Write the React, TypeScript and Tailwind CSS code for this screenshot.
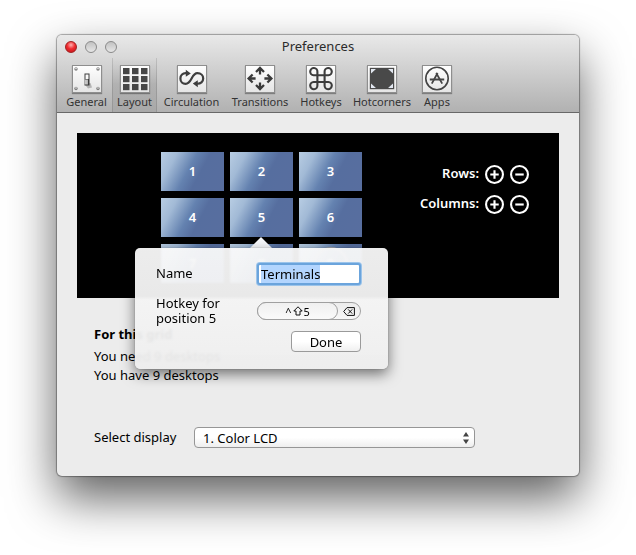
import React from 'react'

const General = () => (
  <>
    {[[4, 4], [26, 4], [4, 23.5], [26, 23.5]].map(([x, y]) => (
      <g key={`${x}-${y}`}>
        <circle cx={x} cy={y} r="1.7" fill="#808080" />
        <circle cx={x} cy={y - 0.5} r="0.8" fill="#e8e8e8" />
      </g>
    ))}
    <path d="M12.5 19l6-1 1.5 4.5-4 1z" fill="#b4b4b4" />
    <rect x="12.5" y="8.5" width="5" height="12" fill="#3c3c3c" />
    <rect x="13.5" y="9.5" width="3" height="4.5" fill="#fafafa" />
    <rect x="12.5" y="14.5" width="3.4" height="5" fill="#c4c4c4" />
  </>
)

const Layout = () => (
  <g fill="#464646">
    {[3, 11, 19].map((y) =>
      [3, 12, 21].map((x) => <rect key={`${x}-${y}`} x={x} y={y} width="6.5" height="6.2" />)
    )}
  </g>
)

const Circulation = () => (
  <>
    <path
      d="M10 8.3C5.5 7.6 3.4 10.4 3.4 13.4 3.4 16.9 5.8 18.8 8.6 18.8 14.8 18.8 14.4 8.2 20.4 8.2 24 8.2 26.2 10.6 26.2 13.4 26.2 16.6 23.8 19 19.8 18.7"
      fill="none" stroke="#3e3e3e" strokeWidth="2.2"
    />
    <path d="M8.8 4.8l5 3.6-5 3.4zM20.8 15.2l-5 3.4 5 3.6z" fill="#3e3e3e" />
  </>
)

const Transitions = () => (
  <path
    d="M15 9.5V3.4M11 7l4-4 4 4M15 17.5v6.2M11 20l4 4 4-4M10.6 13.5H4M7.6 9.5l-4 4 4 4M19.4 13.5H26M22.4 9.5l4 4-4 4"
    fill="none" stroke="#3a3a3a" strokeWidth="2.3"
  />
)

const Hotkeys = () => (
  <path
    d="M11.4 10.2h7.2v6.8h-7.2zM11.4 10.2H7.6a3.6 3.6 0 1 1 3.8-3.4zM18.6 10.2V6.8a3.6 3.6 0 1 1 3.8 3.4zM11.4 17v3.4A3.6 3.6 0 1 1 7.6 17zM18.6 17h3.8a3.6 3.6 0 1 1-3.8 3.4z"
    fill="none" stroke="#3c3c3c" strokeWidth="2.1"
  />
)

const Hotcorners = () => (
  <>
    <rect x="3.4" y="3.4" width="23.2" height="20.2" fill="#e2e7f0" stroke="#4a4a4a" strokeWidth="1.2" />
    <path d="M9.5 3.5h11l6 5.5v9l-6 5.5h-11l-6-5.5V9z" fill="#494949" />
  </>
)

const Apps = () => (
  <g fill="none" stroke="#444">
    <circle cx="15" cy="13.5" r="11.2" strokeWidth="1.6" />
    <path d="M9.8 18.6L15.6 8M14.2 8l6 10.6" strokeWidth="1.8" />
    <path d="M7.8 14.6h14.4" strokeWidth="2" />
  </g>
)

const tools = [
  { label: 'General', width: 'w-[51px]', Icon: General },
  { label: 'Layout', width: 'w-[45px]', Icon: Layout, active: true },
  { label: 'Circulation', width: 'w-[69px]', Icon: Circulation },
  { label: 'Transitions', width: 'w-[68px]', Icon: Transitions },
  { label: 'Hotkeys', width: 'w-[54px]', Icon: Hotkeys },
  { label: 'Hotcorners', width: 'w-[68px]', Icon: Hotcorners },
  { label: 'Apps', width: 'w-[42px]', Icon: Apps },
]

const Header = () => (
  <header className="flex flex-col border-b border-[#686868] bg-linear-to-b from-[#e9e9e9] to-[#b1b1b1]">
    <div className="grid h-[23px] grid-cols-[1fr_auto_1fr] items-center px-2">
      <div className="flex gap-2">
        <button aria-label="Close" className="size-3 rounded-full border border-[#a02020] bg-[radial-gradient(circle_at_50%_30%,#ffb0b0_0%,#f02c30_45%,#c01018_100%)]" />
        <button aria-label="Minimize" className="size-3 rounded-full border border-[#8a8a8a] bg-linear-to-b from-[#c2c2c2] to-[#e6e6e6]" />
        <button aria-label="Zoom" className="size-3 rounded-full border border-[#8a8a8a] bg-linear-to-b from-[#c2c2c2] to-[#e6e6e6]" />
      </div>
      <h1 className="text-[13px] text-[#2b2b2b]">Preferences</h1>
    </div>
    <nav className="flex px-1">
      {tools.map(({ label, width, Icon, active }) => (
        <button
          key={label}
          className={`${width} flex h-[54px] flex-col items-center pt-[7px] text-[11px] leading-4 text-[#333] ${
            active ? 'bg-linear-to-b from-transparent via-black/10 to-black/5 shadow-[inset_1px_0_0_#0000001c,inset_-1px_0_0_#0000001c]' : ''
          }`}
        >
          <svg
            viewBox="0 0 30 28"
            className="h-7 w-[30px] shrink-0 bg-linear-to-b from-white to-[#e4e4e4] shadow-[inset_0_0_0_1px_#8e8e8e,0_1px_1px_#0005]"
          >
            <Icon />
          </svg>
          <span className="mt-px">{label}</span>
        </button>
      ))}
    </nav>
  </header>
)

const Popover = () => (
  <div className="absolute top-[50px] -left-[95px] z-10 w-[253px] text-[13px] font-normal text-black">
    <svg viewBox="0 0 22 11" className="absolute -top-[11px] left-[115px] h-[11px] w-[22px]">
      <path d="M0 11L11 0l11 11z" fill="#f7f8fb" />
    </svg>
    <form
      onSubmit={(e) => e.preventDefault()}
      className="rounded-[5px] bg-linear-to-b from-[#f9f9f9]/95 to-[#ededed]/96 px-[21px] pt-[15px] pb-[17px] shadow-[0_0_1px_#0009,0_5px_14px_#0008] backdrop-blur-[1px]"
    >
      <div className="flex items-center justify-between">
        <label htmlFor="name">Name</label>
        <input
          id="name"
          defaultValue="Terminals"
          autoFocus
          onFocus={(e) => e.target.select()}
          className="mr-[6px] h-[22px] w-[104px] rounded-[3px] border-2 border-[#6ba4dc] bg-white px-[2px] leading-[18px] ring-1 ring-[#9cc4ea] outline-none selection:bg-[#b3d5fe] selection:text-black"
        />
      </div>
      <div className="mt-[11px] flex items-center justify-between leading-[15px]">
        <p>Hotkey for<br />position 5</p>
        <div className="mr-[6px] flex h-[18px] w-[104px] rounded-full border border-[#a0a0a0] bg-linear-to-b from-[#ececec] to-[#f8f8f8]">
          <button className="-my-px -ml-px flex w-[81px] items-center justify-center gap-px rounded-full border border-[#a0a0a0] bg-linear-to-b from-[#f0f0f0] to-[#fafafa] text-[11px]">
            ^
            <svg viewBox="0 0 10 10" className="size-[10px]">
              <path d="M5 .8L9.2 5H7v4H3V5H.8z" fill="none" stroke="#111" />
            </svg>
            5
          </button>
          <button aria-label="Clear hotkey" className="flex flex-1 items-center justify-center">
            <svg viewBox="0 0 12 9" className="h-[9px] w-3">
              <path d="M4 .6h7.4v7.8H4L.7 4.5zM5.2 2.4l4 4.2M9.2 2.4l-4 4.2" fill="none" stroke="#111" />
            </svg>
          </button>
        </div>
      </div>
      <div className="mt-[5px] mr-[6px] flex justify-end">
        <button className="h-[21px] w-[70px] rounded-[4px] border border-[#9a9a9a] bg-linear-to-b from-white from-50% to-[#f0f0f0] leading-[18px]">Done</button>
      </div>
    </form>
  </div>
)

const Stepper = ({ label }: { label: string }) => (
  <div className="flex h-[18px] items-center justify-end gap-[6px]">
    <span className="text-[13px] font-semibold">{label}:</span>
    {['M9 5v8M5 9h8', 'M5 9h8'].map((d, i) => (
      <button key={d} aria-label={`${i ? 'Remove' : 'Add'} ${label.toLowerCase()}`}>
        <svg viewBox="0 0 18 18" className="size-[19px]" fill="none" stroke="white" strokeWidth="2">
          <circle cx="9" cy="9" r="8" />
          <path d={d} />
        </svg>
      </button>
    ))}
  </div>
)

const GridPanel = () => (
  <section className="flex justify-between bg-black pt-[19px] pr-[30px] pb-[15px] pl-[84px] text-white">
    <div className="grid grid-cols-[63px_63px_63px] gap-x-[6px] gap-y-[7px]">
      {[1, 2, 3, 4, 5, 6, 7, 8, 9].map((n) => (
        <div
          key={n}
          className="relative flex h-[39px] items-center justify-center bg-[linear-gradient(118deg,#b8cde3_0%,#a2bad6_20%,#6482b0_44%,#566e9f_60%,#586e9f_100%)] text-[13px] font-semibold"
        >
          {n === 9 ? (
            <span className="flex size-[34px] shrink-0 items-center justify-center rounded-full border-2 border-[#a9a9ad]">{n}</span>
          ) : n}
          {n === 5 && <Popover />}
        </div>
      ))}
    </div>
    <div className="flex flex-col gap-3 pt-[13px]">
      <Stepper label="Rows" />
      <Stepper label="Columns" />
    </div>
  </section>
)

const App = () => {
  return (
    <div className="bg-white px-[57px] pt-[35px] pb-[79px] font-['Noto_Sans','Open_Sans',sans-serif] text-[13px] text-black">
      <main className="rounded-[5px] bg-[#ececec] shadow-[0_0_1px_1px_#0005,0_22px_48px_#000000a0]">
        <div className="overflow-hidden rounded-t-[5px]">
          <Header />
        </div>
        <div className="px-5 pt-5 pb-7">
          <GridPanel />
          <div className="px-[17px] pt-[26px]">
            <h2 className="font-bold leading-5">For this grid</h2>
            <p className="mt-[3px] leading-[19px]">You need 9 desktops</p>
            <p className="leading-[19px]">You have 9 desktops</p>
            <div className="mt-[42px] flex items-center">
              <label htmlFor="display" className="w-[100px]">Select display</label>
              <div className="relative w-[281px]">
                <select
                  id="display"
                  className="block h-[21px] w-full appearance-none rounded-[4px] border border-[#969696] bg-linear-to-b from-white from-50% to-[#eeeeee] px-2 leading-[18px]"
                >
                  <option>1. Color LCD</option>
                </select>
                <svg viewBox="0 0 6 12" className="pointer-events-none absolute top-[5px] right-[6px] h-3 w-[6px]">
                  <path d="M3 0l3 4.6H0zM3 12L0 7.4h6z" fill="#444" />
                </svg>
              </div>
            </div>
          </div>
        </div>
      </main>
    </div>
  )
}

export default App
